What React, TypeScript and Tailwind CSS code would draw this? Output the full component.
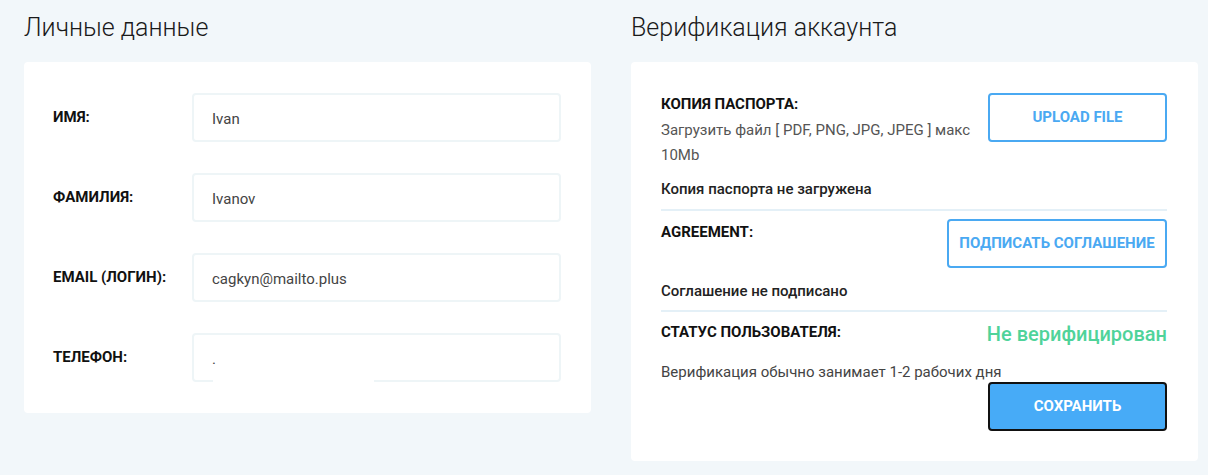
import React from 'react'

const fields = [
  { label: 'Имя:', value: 'Ivan' },
  { label: 'Фамилия:', value: 'Ivanov' },
  { label: 'Email (логин):', value: 'cagkyn@mailto.plus' },
  { label: 'Телефон:', value: '.' },
]

function OutlineButton({ children, className = '' }: { children: React.ReactNode; className?: string }) {
  return (
    <button
      className={`h-[49px] rounded-[4px] border-2 border-[#4aa9f2] bg-white text-[15px] font-bold uppercase text-[#4aa9f2] ${className}`}
    >
      {children}
    </button>
  )
}

export default function App() {
  return (
    <div
      className="min-h-[475px] bg-[#f2f7fa] pl-6 pt-[13px] text-[#222]"
      style={{ fontFamily: 'Roboto, "Noto Sans", sans-serif' }}
    >
      <div className="flex gap-10">
        {/* Personal data */}
        <div className="w-[567px]">
          <h2 className="h-[49px] text-[25px] font-light leading-[30px] text-[#1a1a1a]">Личные данные</h2>
          <div className="flex flex-col gap-[31px] rounded-[4px] bg-white py-[31px] pl-[29px] pr-[30px]">
            {fields.map((f, i) => (
              <div key={f.label} className="flex items-center">
                <div className="w-[139px] text-[15px] font-bold uppercase text-[#111]">{f.label}</div>
                <div className="relative flex-1">
                  <div className="flex h-[49px] items-center rounded-[4px] border-2 border-[#eef5f7] px-[18px] pt-[3px] text-[15px] text-[#444]">
                    {f.value}
                  </div>
                  {i === fields.length - 1 && (
                    <div className="absolute bottom-0 left-[21px] h-[2px] w-[161px] bg-white" />
                  )}
                </div>
              </div>
            ))}
          </div>
        </div>

        {/* Verification */}
        <div className="w-[567px]">
          <h2 className="h-[49px] text-[25px] font-light leading-[30px] text-[#1a1a1a]">Верификация аккаунта</h2>
          <div className="rounded-[4px] bg-white pb-[30px] pl-[30px] pr-[31px] pt-[31px]">
            <div className="flex justify-between">
              <div className="w-[315px] pt-[1px]">
                <div className="text-[15px] font-bold uppercase leading-[20px] text-[#111]">Копия паспорта:</div>
                <div className="mt-[4px] text-[15px] leading-[25px] text-[#555]">
                  Загрузить файл [ PDF, PNG, JPG, JPEG ] макс 10Mb
                </div>
              </div>
              <OutlineButton className="w-[179px]">Upload file</OutlineButton>
            </div>
            <div className="mt-[11px] pb-[10px] text-[15px] font-medium leading-[20px] text-[#222]">
              Копия паспорта не загружена
            </div>
            <div className="h-[2px] bg-[#e4f0f7]" />

            <div className="mt-[8px] flex justify-between">
              <div className="pt-[3px] text-[15px] font-bold uppercase leading-[20px] text-[#111]">Agreement:</div>
              <OutlineButton className="w-[220px]">Подписать соглашение</OutlineButton>
            </div>
            <div className="mt-[13px] pb-[9px] text-[15px] font-medium leading-[20px] text-[#222]">
              Соглашение не подписано
            </div>
            <div className="h-[2px] bg-[#e4f0f7]" />

            <div className="mt-[10px] flex items-start justify-between">
              <div className="text-[15px] font-bold uppercase leading-[20px] text-[#111]">Статус пользователя:</div>
              <div className="text-[20px] font-medium leading-[24px] text-[#4fd39a]">Не верифицирован</div>
            </div>
            <div className="mt-[16px] text-[15px] leading-[20px] text-[#444]">
              Верификация обычно занимает 1-2 рабочих дня
            </div>
            <div className="flex justify-end">
              <button className="h-[49px] w-[179px] rounded-[4px] border-2 border-[#111] bg-[#47abf7] text-[15px] font-bold uppercase text-white">
                Сохранить
              </button>
            </div>
          </div>
        </div>
      </div>
    </div>
  )
}
